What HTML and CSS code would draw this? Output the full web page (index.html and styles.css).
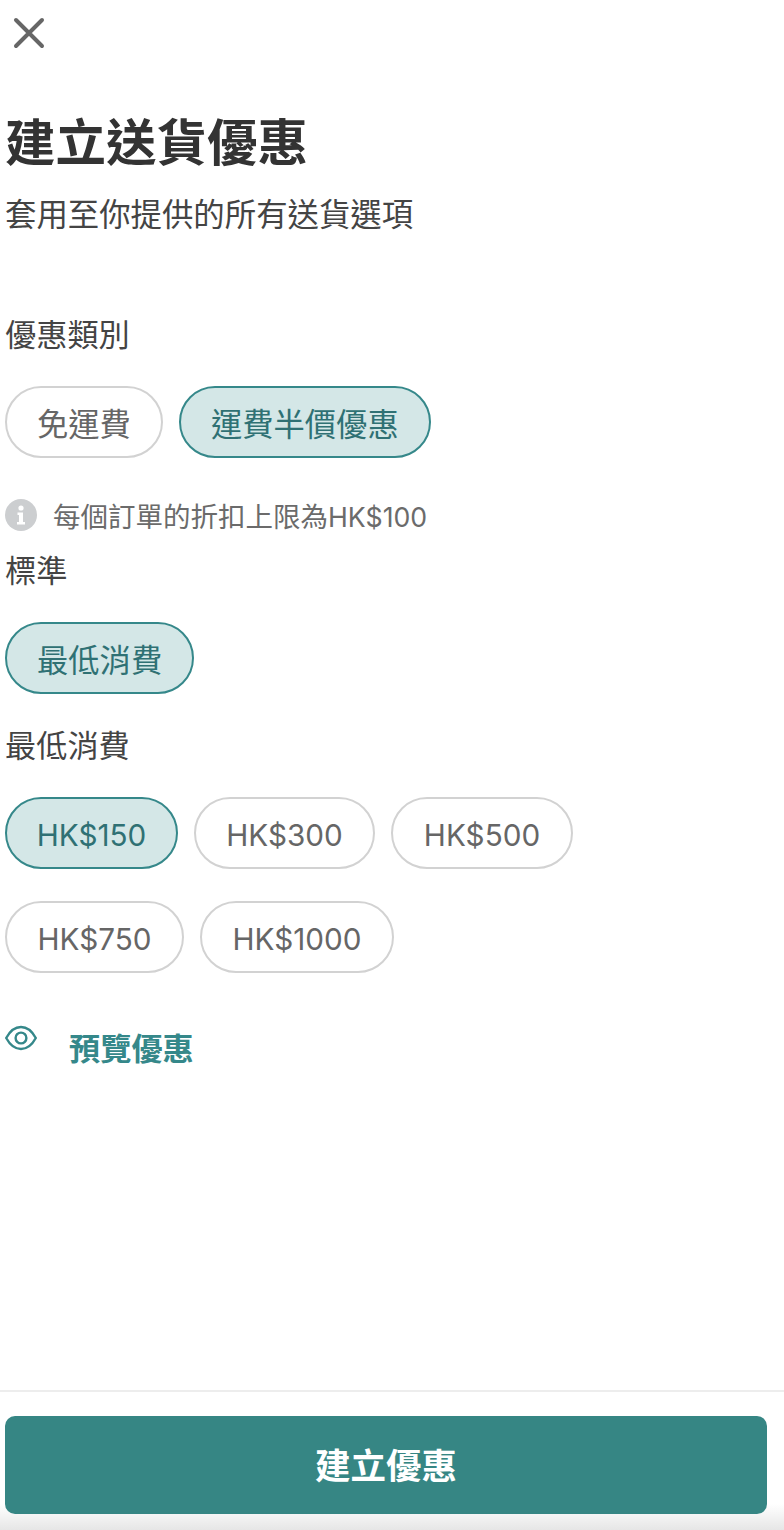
FILE: index.html
```html
<!DOCTYPE html>
<html lang="zh-Hant">
<head>
<meta charset="utf-8">
<title>建立送貨優惠</title>
<link rel="stylesheet" href="styles.css">
</head>
<body>
<div class="page">
  <main class="content">
    <button class="close" aria-label="關閉">
      <svg width="34" height="34" viewBox="0 0 34 34"><path d="M4 4 L30 30 M30 4 L4 30" stroke="#666" stroke-width="4" stroke-linecap="round" fill="none"/></svg>
    </button>
    <h1 class="title">建立送貨優惠</h1>
    <p class="subtitle">套用至你提供的所有送貨選項</p>

    <div class="label label-first">優惠類別</div>
    <div class="chips">
      <span class="chip">免運費</span>
      <span class="chip chip-on">運費半價優惠</span>
    </div>
    <div class="note">
      <svg class="note-icon" width="32" height="32" viewBox="0 0 32 32"><circle cx="16" cy="16" r="16" fill="#ccced0"/><circle cx="16" cy="9" r="2.6" fill="#fff"/><path d="M12.5 13.5h5.5v9.5h2v2.5h-8v-2.5h2v-7h-1.5z" fill="#fff"/></svg>
      <span class="note-text">每個訂單的折扣上限為<span class="note-amount">HK$100</span></span>
    </div>
    <div class="label label-std">標準</div>
    <div class="chips">
      <span class="chip chip-on">最低消費</span>
    </div>
    <div class="label label-min">最低消費</div>
    <div class="chips chips-wrap">
      <span class="chip chip-num chip-on w173">HK$150</span>
      <span class="chip chip-num w181">HK$300</span>
      <span class="chip chip-num w182">HK$500</span>
      <span class="chip chip-num w179">HK$750</span>
      <span class="chip chip-num w194">HK$1000</span>
    </div>
    <div class="preview">
      <svg class="eye" width="32" height="26" viewBox="0 0 32 26"><path d="M1.2 13C5 6 10 2 16 2S27 6 30.8 13C27 20 22 24 16 24S5 20 1.2 13Z" fill="none" stroke="#35888a" stroke-width="2.4"/><circle cx="16" cy="13" r="5.4" fill="none" stroke="#35888a" stroke-width="2.4"/></svg>
      <span class="preview-text">預覽優惠</span>
    </div>
  </main>
  <footer class="footer">
    <button class="submit">建立優惠</button>
  </footer>
</div>
</body>
</html>
```
FILE: styles.css
```css
* { box-sizing: border-box; }
html, body { margin: 0; padding: 0; background: #fff; }
body { font-family: Inter, "Noto Sans CJK TC", "Noto Sans", sans-serif; color: #3a3a3a; }
.page { width: 784px; height: 1530px; display: flex; flex-direction: column; overflow: hidden; }
.content { flex: 1; padding: 0 5px; }
.close { display: block; width: 34px; height: 34px; margin: 16px 0 0 7px; padding: 0; border: 0; background: none; }
.close svg { display: block; }
.title { margin: 63px 0 0; font-size: 50.5px; line-height: 60px; font-weight: 700; color: #333; }
.subtitle { margin: 20px 0 0; font-size: 31.4px; line-height: 44px; font-weight: 400; color: #444; }
.label { padding-bottom: 1px; font-size: 31.2px; line-height: 44px; color: #444; }
.label-first { margin-top: 76px; }
.label-std { margin-top: 16px; }
.label-min { margin-top: 30px; }
.chips { display: flex; gap: 16px; margin-top: 28px; }
.chips-wrap { flex-wrap: wrap; gap: 32px 16px; width: 600px; }
.chip { display: flex; align-items: center; justify-content: center; height: 72px; padding: 0 30px; border: 2.5px solid #d2d2d2; border-radius: 36px; font-size: 31.3px; color: #666; background: #fff; white-space: nowrap; }
.chip-on { border-color: #35888a; background: #d4e7e7; color: #2f7174; }
.chip-num { padding: 3px 0 0; font-size: 29.7px; }
.w173 { width: 173px; }
.w181 { width: 181px; }
.w182 { width: 182px; }
.w179 { width: 179px; }
.w194 { width: 194px; }
.note { display: flex; align-items: center; gap: 16px; margin-top: 37px; height: 38px; font-size: 27.5px; color: #6b6b6b; }
.note-text { padding-top: 2px; }
.note-amount { font-size: 26.7px; }
.note-icon { flex: none; margin-top: 1px; }
.preview { display: flex; align-items: flex-start; margin-top: 50px; }
.eye { flex: none; margin-top: 2px; }
.preview-text { margin: 4px 0 0 32px; font-size: 31.2px; line-height: 44px; font-weight: 700; color: #35888a; }
.footer { height: 140px; padding: 24px 17px 0 5px; border-top: 2px solid #ededed; background: linear-gradient(to bottom, #fff 0, #fff 112px, #e4e4e4 140px); }
.submit { display: block; width: 100%; height: 98px; padding: 0 0 4px; border: 0; border-radius: 10px; background: #368684; color: #fff; font-family: inherit; font-size: 35.5px; font-weight: 700; }
```
